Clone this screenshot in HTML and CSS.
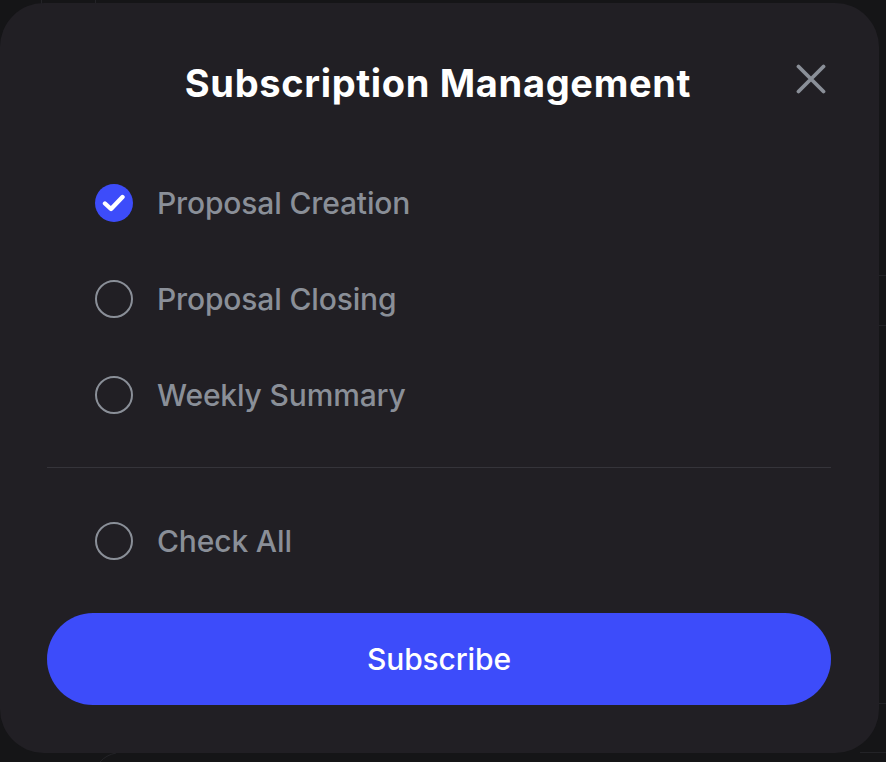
FILE: index.html
```html
<!DOCTYPE html>
<html lang="en">
<head>
    <meta charset="UTF-8">
    <meta name="viewport" content="width=device-width, initial-scale=1.0">
    <title>Subscription Management</title>
    <link rel="stylesheet" href="styles.css">
</head>
<body>
    <!-- faint lines of the page behind the dialog -->
    <svg class="backdrop" width="886" height="762" viewBox="0 0 886 762">
        <path d="M41.5 0 V4 M95.5 0 V4 M879 275.5 H886 M879 325.5 H886 M879 703.5 H886 M860 752.5 H886 M100 762 Q106 755 116 753" fill="none" stroke="#232327" stroke-width="1"/>
    </svg>
    <div class="dialog">
        <div class="header">
            <h1 class="title">Subscription Management</h1>
            <svg class="close" width="30" height="30" viewBox="0 0 30 30">
                <path d="M2.5 2.5 L27.5 27.5 M27.5 2.5 L2.5 27.5" fill="none" stroke="#8a8f98" stroke-width="3.8" stroke-linecap="round"/>
            </svg>
        </div>
        <ul class="options">
            <li class="option">
                <span class="radio checked">
                    <svg width="24" height="20" viewBox="0 0 24 20">
                        <path d="M3 10.5 L9 16 L20.5 4" fill="none" stroke="#fff" stroke-width="4.4" stroke-linecap="round" stroke-linejoin="round"/>
                    </svg>
                </span>
                Proposal Creation
            </li>
            <li class="option"><span class="radio"></span>Proposal Closing</li>
            <li class="option"><span class="radio"></span>Weekly Summary</li>
        </ul>
        <div class="divider"></div>
        <div class="option check-all"><span class="radio"></span>Check All</div>
        <button class="subscribe">Subscribe</button>
    </div>
</body>
</html>
```

FILE: styles.css
```css
*{
    margin: 0;
    padding: 0;
    list-style: none;
    box-sizing: border-box;
}
body{
    background-color: #151517;
    font-family: "Inter", "Liberation Sans", sans-serif;
    height: 762px;
    overflow: hidden;
    padding-top: 3px;
}
.backdrop{
    position: absolute;
    top: 0;
    left: 0;
}
.dialog{
    background-color: #211f24;
    width: 879px;
    height: 750px;
    border-radius: 44px;
    padding: 0 48px 0 47px;
    position: relative;
}
.header{
    display: flex;
    justify-content: center;
    height: 120px;
    padding-top: 52px;
    position: relative;
}
.title{
    color: #fff;
    font-size: 38px;
    font-weight: 700;
    line-height: 54px;
    letter-spacing: 0.67px;
    margin-top: 1px;
    margin-right: 2px;
}
.close{
    position: absolute;
    right: 5px;
    top: 61px;
}
.options{
    padding-top: 32px;
}
.option{
    display: flex;
    align-items: center;
    gap: 24px;
    height: 96px;
    padding-left: 48px;
    color: #8a8f98;
    font-size: 30px;
    font-weight: 500;
    letter-spacing: -0.15px;
}
.radio{
    width: 38px;
    height: 38px;
    border-radius: 50%;
    border: 2px solid #8a8f98;
    display: flex;
    align-items: center;
    justify-content: center;
    flex-shrink: 0;
}
.radio.checked{
    background-color: #3d4cfa;
    border: none;
}
.divider{
    height: 1px;
    background-color: #35343a;
    margin-top: 24px;
}
.check-all{
    height: 145px;
    padding-top: 1px;
}
.subscribe{
    display: block;
    width: 100%;
    height: 92px;
    border: none;
    border-radius: 46px;
    background-color: #3d4cfa;
    color: #fff;
    font-family: inherit;
    font-size: 30px;
    font-weight: 500;
    letter-spacing: -0.15px;
}
```
